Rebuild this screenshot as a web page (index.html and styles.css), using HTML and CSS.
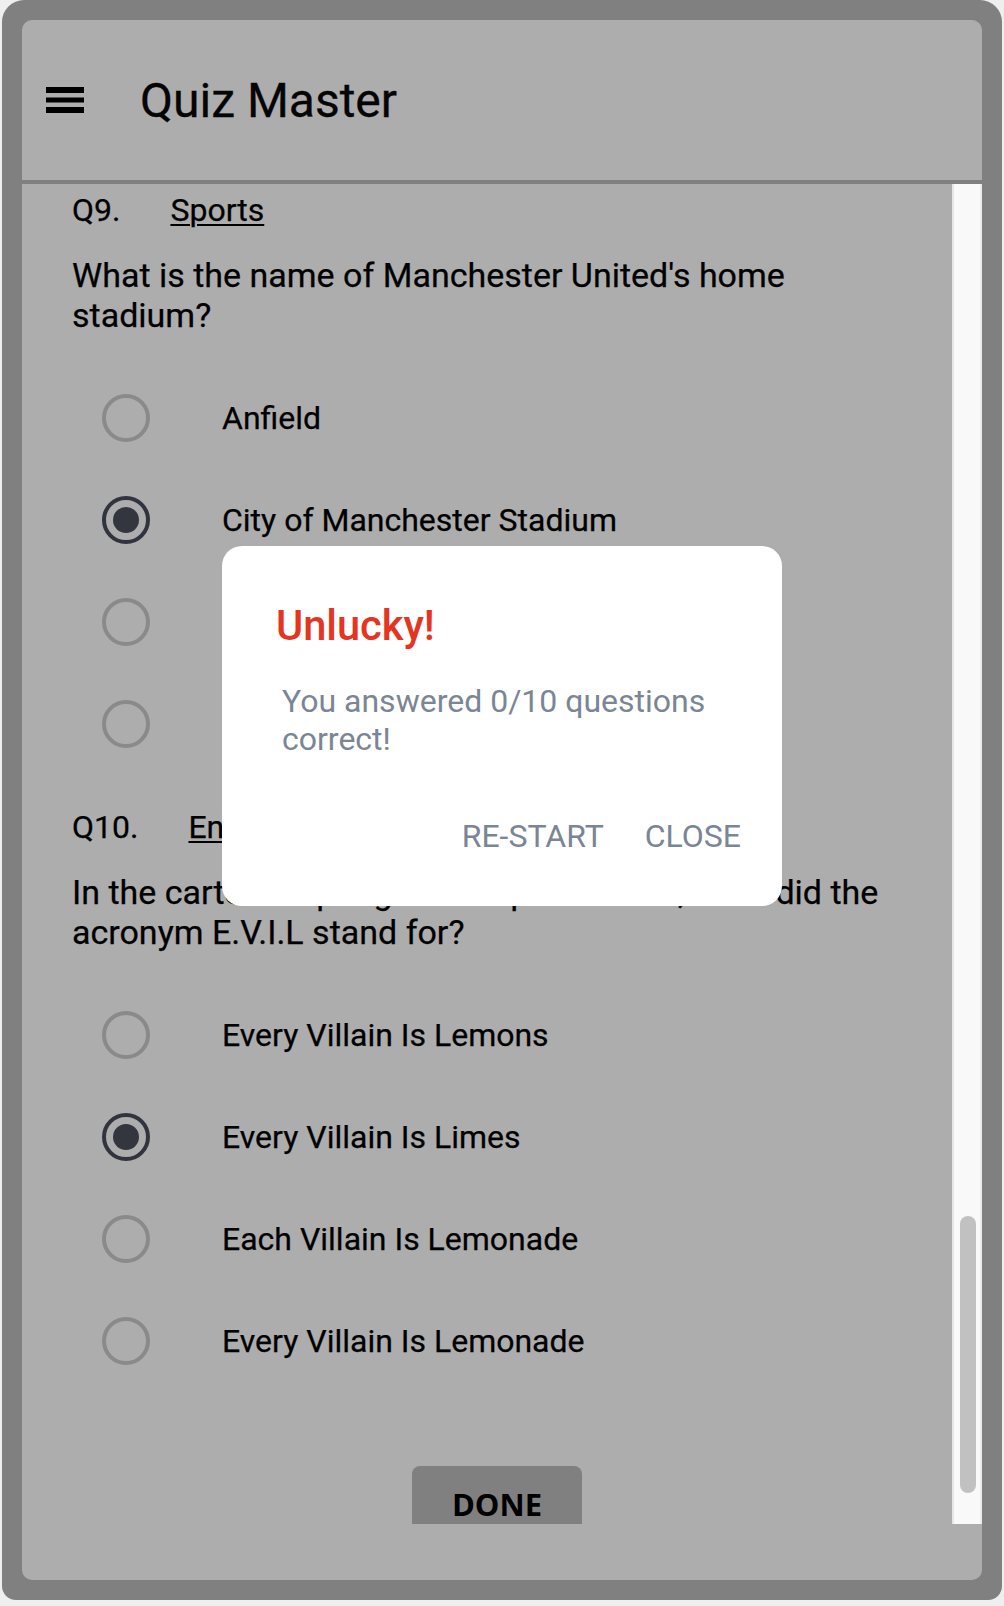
FILE: index.html
```html
<!DOCTYPE html>
<html lang="en">
<head>
<meta charset="utf-8">
<title>Quiz Master</title>
<link rel="stylesheet" href="styles.css">
</head>
<body>
<div class="frame">
  <div class="panel">
    <header class="appbar">
      <svg class="menu-icon" viewBox="0 0 38 26" width="38" height="26" aria-hidden="true">
        <rect x="0" y="0" width="38" height="6" fill="#000"/>
        <rect x="0" y="10.5" width="38" height="5" fill="#000"/>
        <rect x="0" y="20" width="38" height="6" fill="#000"/>
      </svg>
      <h1 class="app-title">Quiz Master</h1>
    </header>
    <div class="scroll-area">
      <main class="content">
        <section class="question">
          <div class="q-head"><span class="q-num">Q9.</span><a class="q-cat">Sports</a></div>
          <p class="q-text">What is the name of Manchester United's home stadium?</p>
          <ul class="options">
            <li class="option"><span class="radio"></span><span class="opt-label">Anfield</span></li>
            <li class="option"><span class="radio checked"></span><span class="opt-label">City of Manchester Stadium</span></li>
            <li class="option"><span class="radio"></span><span class="opt-label">Old Trafford</span></li>
            <li class="option"><span class="radio"></span><span class="opt-label">Stamford Bridge</span></li>
          </ul>
        </section>
        <section class="question">
          <div class="q-head"><span class="q-num">Q10.</span><a class="q-cat">Entertainment</a></div>
          <p class="q-text">In the cartoon 'SpongeBob SquarePants', what did the acronym E.V.I.L stand for?</p>
          <ul class="options">
            <li class="option"><span class="radio"></span><span class="opt-label">Every Villain Is Lemons</span></li>
            <li class="option"><span class="radio checked"></span><span class="opt-label">Every Villain Is Limes</span></li>
            <li class="option"><span class="radio"></span><span class="opt-label">Each Villain Is Lemonade</span></li>
            <li class="option"><span class="radio"></span><span class="opt-label">Every Villain Is Lemonade</span></li>
          </ul>
        </section>
        <div class="done-wrap"><button class="done-btn">DONE</button></div>
      </main>
      <div class="scrollbar"><div class="thumb"></div></div>
    </div>
    <div class="footer"></div>
  </div>

  <div class="dialog" role="dialog">
    <h2 class="dlg-title">Unlucky!</h2>
    <p class="dlg-body">You answered 0/10 questions correct!</p>
    <div class="dlg-actions">
      <span class="dlg-btn">RE-START</span>
      <span class="dlg-btn">CLOSE</span>
    </div>
  </div>
</div>
</body>
</html>
```
FILE: styles.css
```css
* { box-sizing: border-box; }

html, body {
  margin: 0;
  padding: 0;
  background: #efefef;
  font-family: Roboto, "Liberation Sans", sans-serif;
  color: #000;
}

.frame {
  position: relative;
  width: 1000px;
  height: 1600px;
  margin-left: 2px;
  background: #808080;
  border-radius: 22px 22px 14px 14px;
  padding: 20px;
}

.panel {
  display: flex;
  flex-direction: column;
  height: 100%;
  background: #adadad;
  border-radius: 10px;
  overflow: hidden;
}

.appbar {
  flex: 0 0 auto;
  height: 164px;
  display: flex;
  align-items: center;
  padding-left: 24px;
  border-bottom: 4px solid #808080;
}

.menu-icon { display: block; flex: 0 0 auto; }

.app-title {
  margin: 0 0 0 56px;
  font-size: 48px;
  font-weight: 400;
  color: #050505;
  -webkit-text-stroke: 0.3px #050505;
}

.scroll-area {
  flex: 0 0 1340px;
  display: flex;
  overflow: hidden;
}

.content {
  flex: 1 1 auto;
  overflow: hidden;
  padding: 7px 50px 0 50px;
  -webkit-text-stroke: 0.25px #000;
}

.question + .question { margin-top: 33px; }

.q-head {
  display: flex;
  font-size: 32px;
}

.q-num { margin-right: 50px; }

.q-cat {
  text-decoration: underline;
  text-decoration-thickness: 2px;
  text-underline-offset: 3px;
}

.q-text {
  margin: 26px 0 0 0;
  font-size: 34px;
}

.options {
  list-style: none;
  margin: 32px 0 0 0;
  padding: 0;
}

.option {
  height: 102px;
  display: flex;
  align-items: center;
  padding-left: 30px;
  font-size: 32px;
}

.radio {
  flex: 0 0 48px;
  width: 48px;
  height: 48px;
  border-radius: 50%;
  border: 4px solid #8a8a8a;
  display: flex;
  align-items: center;
  justify-content: center;
  -webkit-text-stroke: 0;
}

.radio.checked { border-color: #31333e; }

.radio.checked::after {
  content: "";
  width: 26px;
  height: 26px;
  border-radius: 50%;
  background: #33353f;
}

.opt-label { margin-left: 72px; }

.done-wrap {
  display: flex;
  justify-content: center;
  margin-top: 74px;
}

.done-btn {
  margin-left: 20px;
  width: 170px;
  padding: 17px 0 30px;
  border: none;
  border-radius: 8px 8px 0 0;
  background: #808080;
  color: #000;
  font-family: "Open Sans", "Noto Sans", sans-serif;
  font-weight: 700;
  font-size: 31px;
  line-height: normal;
  -webkit-text-stroke: 0;
}

.scrollbar {
  flex: 0 0 30px;
  background: #f9f9f9;
  border-left: 2px solid #e6e6e6;
  border-right: 2px solid #ececec;
  padding-left: 6px;
}

.thumb {
  width: 16px;
  height: 277px;
  margin-top: 1032px;
  border-radius: 8px;
  background: #c1c1c1;
}

.footer { flex: 1 1 auto; }

.dialog {
  position: absolute;
  left: 220px;
  top: 546px;
  width: 560px;
  height: 360px;
  background: #fff;
  border-radius: 20px;
  padding: 55px 41px 0 54px;
}

.dlg-title {
  margin: 0;
  font-size: 41.6px;
  font-weight: 500;
  color: #e53422;
}

.dlg-body {
  margin: 32px 0 0 6px;
  font-size: 32px;
  color: #7a8596;
}

.dlg-actions {
  display: flex;
  justify-content: flex-end;
  gap: 41px;
  margin-top: 59px;
  font-size: 32px;
  color: #7a8596;
}
```
